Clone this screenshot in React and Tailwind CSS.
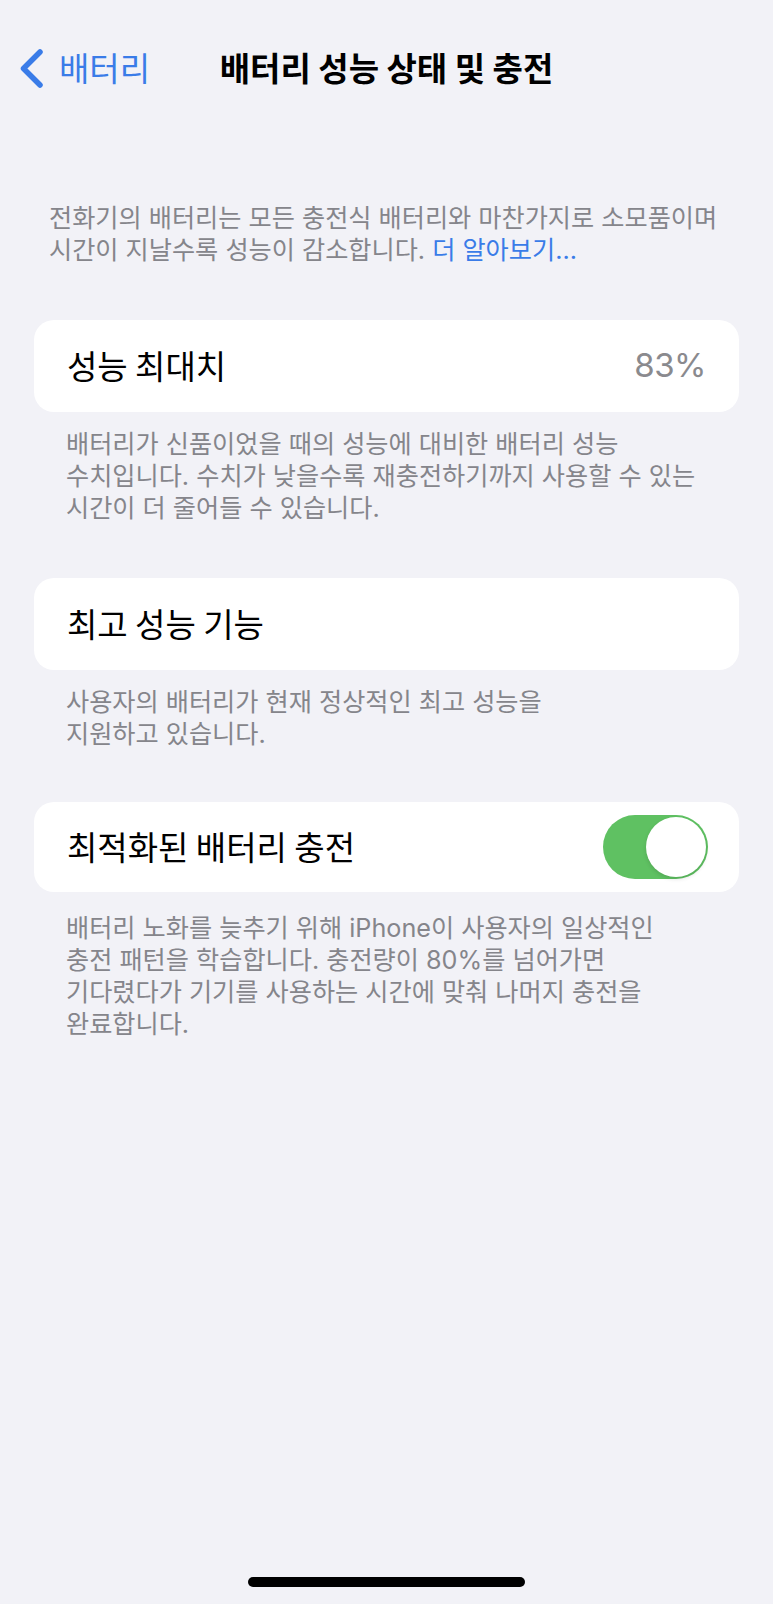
import React from "react";

const kr = "font-['Noto_Sans_CJK_KR','Noto_Sans_CJK_SC',sans-serif]";
const note = "font-['Inter','Noto_Sans_CJK_KR','Noto_Sans_CJK_SC',sans-serif]";
const latin = "font-['Inter',sans-serif]";

function Footnote({ lines }) {
  return (
    <div className={`px-[66px] text-[25.2px] leading-[32px] text-[#85858b] ${note}`}>
      {lines.map((l, i) => (
        <div key={i} className="whitespace-nowrap">
          {l}
        </div>
      ))}
    </div>
  );
}

function Card({ children }) {
  return (
    <div className="mx-[34px] flex h-[92px] items-center justify-between rounded-[20px] bg-white pl-[33px] pr-[33px]">
      {children}
    </div>
  );
}

function Label({ children }) {
  return <span className={`text-[33px] text-black ${kr}`}>{children}</span>;
}

function Toggle() {
  return (
    <div className="mr-[-1px] flex h-[64px] w-[105px] items-center justify-end rounded-full bg-[#5fc162] p-[2px]">
      <div className="h-[60px] w-[60px] rounded-full bg-white shadow-[0_2px_4px_rgba(0,0,0,0.12)]" />
    </div>
  );
}

export default function App() {
  return (
    <div className="relative flex h-[1604px] w-[773px] flex-col overflow-hidden bg-[#f2f2f7]">
      {/* navigation bar */}
      <div className="mt-[43px] grid h-[40px] grid-cols-[1fr_auto_1fr] items-center">
        <div className="flex items-center pl-[16px]">
          <svg width="28" height="40" viewBox="0 0 28 40" fill="none">
            <path
              d="M24 4 L7.5 20.5 L24 37"
              stroke="#3a7ce8"
              strokeWidth="5.5"
              strokeLinecap="round"
              strokeLinejoin="round"
            />
          </svg>
          <span className={`ml-[15px] text-[33px] text-[#3a7ce8] ${kr}`}>배터리</span>
        </div>
        <div className={`text-[33px] font-semibold text-black ${kr}`}>배터리 성능 상태 및 충전</div>
        <div />
      </div>

      {/* intro */}
      <div className={`mt-[119px] px-[49px] text-[25.2px] leading-[32px] text-[#85858b] ${note}`}>
        <div className="whitespace-nowrap">전화기의 배터리는 모든 충전식 배터리와 마찬가지로 소모품이며</div>
        <div className="whitespace-nowrap">
          시간이 지날수록 성능이 감소합니다. <span className="text-[#3a7ce8]">더 알아보기...</span>
        </div>
      </div>

      <div className="mt-[54px]">
        <Card>
          <Label>성능 최대치</Label>
          <span className={`${latin} text-[33px] tracking-[-0.5px] text-[#8a8a8e]`}>83%</span>
        </Card>
      </div>
      <div className="mt-[16px]">
        <Footnote
          lines={[
            "배터리가 신품이었을 때의 성능에 대비한 배터리 성능",
            "수치입니다. 수치가 낮을수록 재충전하기까지 사용할 수 있는",
            "시간이 더 줄어들 수 있습니다.",
          ]}
        />
      </div>

      <div className="mt-[54px]">
        <Card>
          <Label>최고 성능 기능</Label>
        </Card>
      </div>
      <div className="mt-[16px]">
        <Footnote lines={["사용자의 배터리가 현재 정상적인 최고 성능을", "지원하고 있습니다."]} />
      </div>

      <div className="mt-[52px]">
        <div className="mx-[34px] flex h-[90px] items-center justify-between rounded-[20px] bg-white pl-[33px] pr-[32px]">
          <Label>최적화된 배터리 충전</Label>
          <Toggle />
        </div>
      </div>
      <div className="mt-[20px]">
        <Footnote
          lines={[
            <>
              배터리 노화를 늦추기 위해 <span className={latin}>iPhone</span>이 사용자의 일상적인
            </>,
            <>
              충전 패턴을 학습합니다. 충전량이 <span className={latin}>80%</span>를 넘어가면
            </>,
            "기다렸다가 기기를 사용하는 시간에 맞춰 나머지 충전을",
            "완료합니다.",
          ]}
        />
      </div>

      {/* home indicator */}
      <div className="mb-[17px] mt-auto h-[10px] w-[277px] self-center rounded-full bg-black" />
    </div>
  );
}
